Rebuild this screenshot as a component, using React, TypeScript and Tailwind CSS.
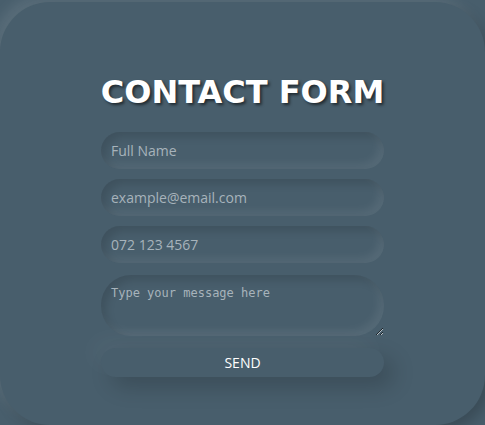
import { useState } from 'react';

const fieldClass =
  "w-full h-[37px] rounded-full bg-transparent px-[10px] text-[14px] text-white placeholder:text-[#a7b3bb] outline-none border-0 shadow-[inset_5px_5px_9px_rgba(0,0,0,0.13),inset_-5px_-5px_9px_rgba(255,255,255,0.07)] font-['Open_Sans',sans-serif]";

const App = () => {
  const [name, setName] = useState('');
  const [email, setEmail] = useState('');
  const [phone, setPhone] = useState('');
  const [message, setMessage] = useState('');

  return (
    <div className="min-h-screen w-full overflow-hidden bg-[#485e6c] pt-[2px]">
      <div className="w-full h-[423px] rounded-[50px] bg-[#485e6c] shadow-[-6px_-6px_14px_rgba(255,255,255,0.1),6px_6px_14px_rgba(0,0,0,0.2)] flex flex-col items-center pt-[70px]">
        <h1 className="text-[32px] leading-[40px] font-bold text-white font-['DejaVu_Sans',sans-serif] [text-shadow:2px_2px_3px_rgba(0,0,0,0.55)] mb-[20px]">
          CONTACT FORM
        </h1>
        <form className="w-[283px] flex flex-col gap-[10px]" onSubmit={(e) => e.preventDefault()}>
          <input className={fieldClass} placeholder="Full Name" value={name} onChange={(e) => setName(e.target.value)} />
          <input className={fieldClass} placeholder="example@email.com" value={email} onChange={(e) => setEmail(e.target.value)} />
          <input className={fieldClass} placeholder="072 123 4567" value={phone} onChange={(e) => setPhone(e.target.value)} />
          <textarea
            className="w-full h-[61px] mt-[2px] rounded-[30px] bg-transparent px-[10px] pt-[9px] text-[12px] text-white placeholder:text-[#a7b3bb] outline-none border-0 shadow-[inset_5px_5px_9px_rgba(0,0,0,0.13),inset_-5px_-5px_9px_rgba(255,255,255,0.07)] font-['DejaVu_Sans_Mono',monospace]"
            placeholder="Type your message here"
            value={message}
            onChange={(e) => setMessage(e.target.value)}
          />
          <button
            type="submit"
            className="w-full h-[29px] mt-[2px] rounded-[15px] bg-[#485e6c] text-white text-[14px] font-['Open_Sans',sans-serif] shadow-[10px_10px_22px_rgba(0,0,0,0.18),-10px_-10px_22px_rgba(255,255,255,0.04)]"
          >
            SEND
          </button>
        </form>
      </div>
    </div>
  );
};

export default App;
